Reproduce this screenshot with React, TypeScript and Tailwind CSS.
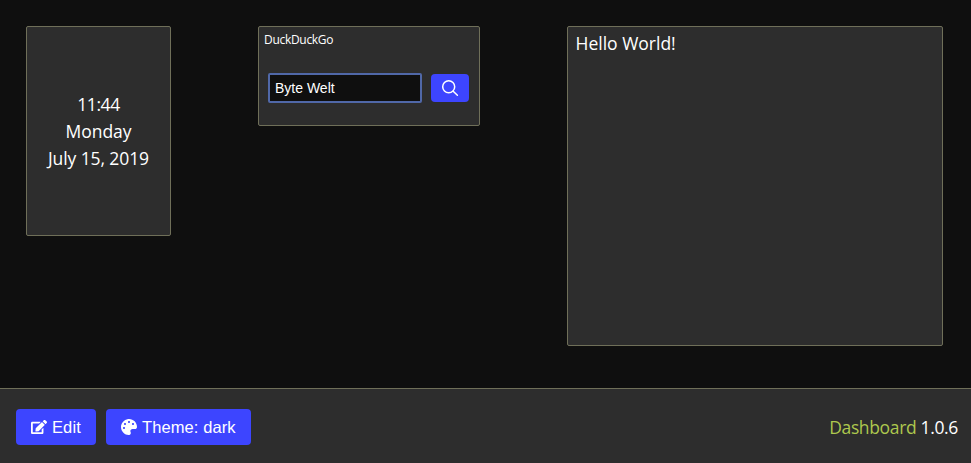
import { FaEdit, FaPalette } from "react-icons/fa";

const panel = "rounded-[2px] border border-[#6f6f59] bg-[#2d2d2d]";
const button =
  "flex h-9 items-center rounded-[4px] bg-[#3d45ff] font-['Liberation_Sans',Arial,sans-serif] text-[16.5px] tracking-[0.1px] text-white";

function SearchIcon() {
  return (
    <svg width="18" height="18" viewBox="0 0 18 18" fill="none" stroke="currentColor" strokeWidth="1.5" strokeLinecap="round">
      <circle cx="7.7" cy="7.7" r="6" />
      <path d="M12.2 12.2 16.4 16.2" />
    </svg>
  );
}

function Clock() {
  return (
    <section className={`${panel} flex h-[210px] w-[145px] flex-col items-center justify-center text-[17.5px] leading-[27px]`}>
      <p className="tracking-[-0.4px]">11:44</p>
      <p>Monday</p>
      <p className="tracking-[-0.1px]">July 15, 2019</p>
    </section>
  );
}

function Search() {
  return (
    <section className={`${panel} ml-[87px] h-[100px] w-[222px]`}>
      <h2 className="ml-[5px] mt-1 text-[12px] leading-[18px] tracking-[-0.3px]">DuckDuckGo</h2>
      <form className="ml-[9px] mt-[24px] flex items-center gap-[9px]">
        <input
          className="h-[30px] w-[154px] rounded-[2px] border-2 border-[#5068a8] bg-[#0f0f0f] px-[5px] font-['Liberation_Sans',Arial,sans-serif] text-[14px] text-white outline-none"
          defaultValue="Byte Welt"
        />
        <button type="button" className="flex h-7 w-[38px] items-center justify-center rounded-[4px] bg-[#3d45ff]">
          <SearchIcon />
        </button>
      </form>
    </section>
  );
}

export default function App() {
  return (
    <div className="flex h-[463px] w-[971px] flex-col overflow-hidden bg-[#0f0f0f] font-['Open_Sans','Noto_Sans',sans-serif] text-white">
      <main className="flex flex-1 items-start pl-[26px] pt-[26px]">
        <Clock />
        <Search />
        <section className={`${panel} ml-[87px] h-[320px] w-[376px] px-[7.5px] pt-[3px] text-[17.5px] leading-[26px]`}>
          Hello World!
        </section>
      </main>
      <footer className="flex h-[75px] items-center justify-between border-t border-[#6f6f59] bg-[#2d2d2d] pl-4 pr-[13px] pt-[2px]">
        <div className="flex gap-[10px]">
          <button className={`${button} w-20 gap-[5px] pl-[15px]`}>
            <FaEdit size={16} />
            <span>Edit</span>
          </button>
          <button className={`${button} w-[145px] gap-[5px] pl-[15px]`}>
            <FaPalette size={16} />
            <span>Theme: dark</span>
          </button>
        </div>
        <p className="text-[17.5px] leading-[26px] tracking-[-0.35px]">
          <span className="text-[#adc84e]">Dashboard</span> 1.0.6
        </p>
      </footer>
    </div>
  );
}
